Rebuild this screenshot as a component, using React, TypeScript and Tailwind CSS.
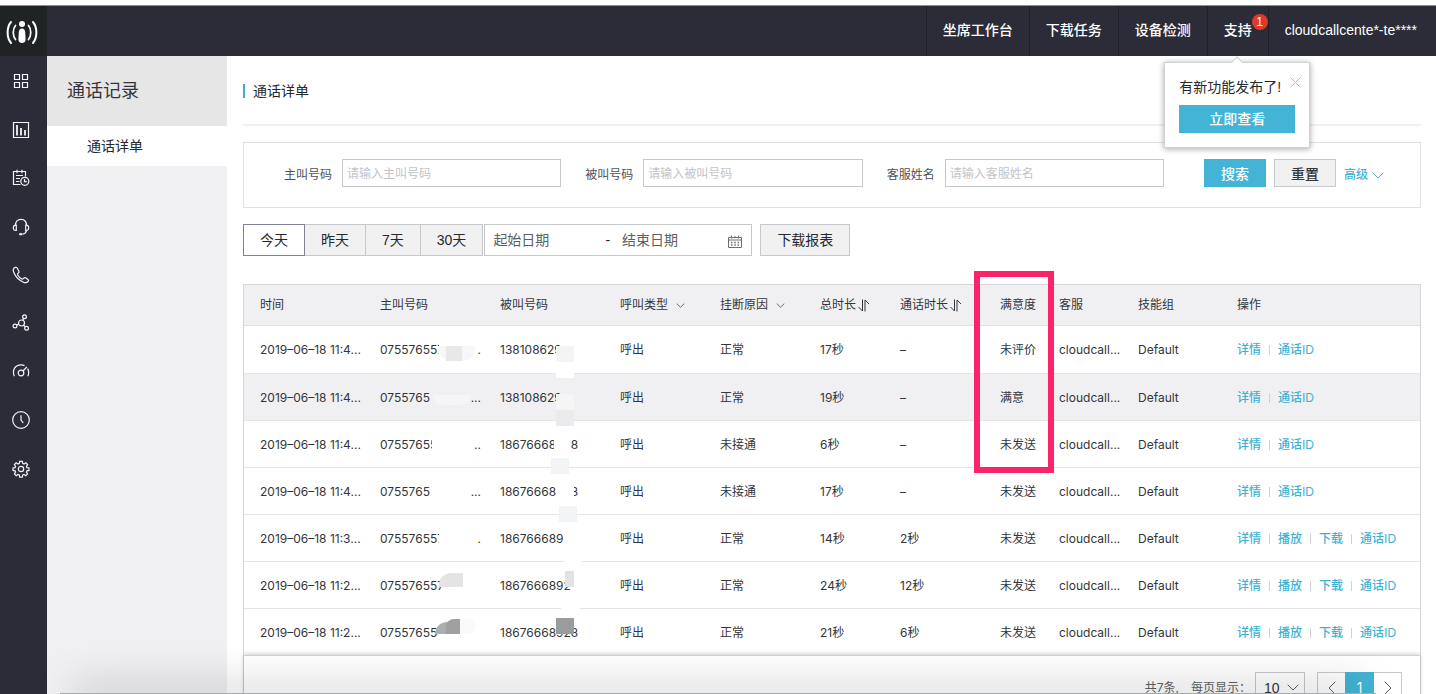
import type { ReactNode } from "react";

type Call = {
  time: string;
  caller: string;
  dots: string;
  callee: string;
  callerMask: string[];
  calleeMask: string[];
  reason: string;
  total: string;
  talk: string;
  rating: string;
  actions: string[];
  hovered?: boolean;
};

const SHORT = ["详情", "通话ID"];
const LONG = ["详情", "播放", "下载", "通话ID"];

const CALLS: Call[] = [
  {
    time: "2019–06–18 11:4...", caller: "075576557", dots: "..", callee: "138108629",
    callerMask: [
      "left-[75px] top-4 h-5 w-[38px] bg-white",
      "left-[75px] top-5 h-[15px] w-9 rounded-b-xl bg-[#f7f7f9]",
      "left-[82px] top-5 h-[15px] w-4 bg-[#e8e8e8]",
    ],
    calleeMask: ["left-[72px] top-5 h-4 w-[18px] bg-[#f4f4f5]", "left-[72px] top-9 z-10 h-4 w-[18px] bg-white"],
    reason: "正常", total: "17秒", talk: "–", rating: "未评价", actions: SHORT,
  },
  {
    time: "2019–06–18 11:4...", caller: "0755765", dots: "...", callee: "138108629",
    callerMask: ["left-[70px] top-[21px] h-[10px] w-9 rounded-b-lg bg-[#f5f5f7]"],
    calleeMask: ["left-[72px] top-5 h-4 w-[18px] bg-[#f5f5f5]", "left-[72px] top-9 z-10 h-4 w-[18px] bg-[#ebebed]"],
    reason: "正常", total: "19秒", talk: "–", rating: "满意", actions: SHORT, hovered: true,
  },
  {
    time: "2019–06–18 11:4...", caller: "07557655", dots: "..", callee: "18676668928",
    callerMask: ["left-[68px] top-4 h-4 w-6 bg-white"],
    calleeMask: ["left-[70px] top-4 h-4 w-[17px] bg-white", "left-[67px] top-[37px] z-10 h-4 w-[18px] bg-[#f3f4f6]"],
    reason: "未接通", total: "6秒", talk: "–", rating: "未发送", actions: SHORT,
  },
  {
    time: "2019–06–18 11:4...", caller: "0755765", dots: "...", callee: "18676668928",
    callerMask: [],
    calleeMask: ["left-[72px] top-4 h-4 w-[18px] bg-white", "left-[75px] top-[38px] z-10 h-4 w-[18px] bg-[#f3f4f6]"],
    reason: "未接通", total: "17秒", talk: "–", rating: "未发送", actions: SHORT,
  },
  {
    time: "2019–06–18 11:3...", caller: "075576557", dots: ".", callee: "186766689",
    callerMask: ["left-[75px] top-4 h-4 w-6 bg-white"],
    calleeMask: ["left-20 top-10 z-10 h-3 w-[18px] bg-white"],
    reason: "正常", total: "14秒", talk: "2秒", rating: "未发送", actions: LONG,
  },
  {
    time: "2019–06–18 11:2...", caller: "075576557", dots: "", callee: "1867666892",
    callerMask: ["left-[75px] top-[11px] h-[14px] w-6 rounded-tl-xl bg-[#e4e4e4]"],
    calleeMask: ["left-[81px] top-[9px] h-4 w-[9px] bg-[#e2e2e4]", "left-[77px] top-10 z-10 h-3 w-[19px] bg-white"],
    reason: "正常", total: "24秒", talk: "12秒", rating: "未发送", actions: LONG,
  },
  {
    time: "2019–06–18 11:2...", caller: "07557655", dots: "", callee: "18676668928",
    callerMask: [
      "left-[71px] top-[13px] h-3 w-[14px] rounded-tl-xl bg-[#adaeb0]",
      "left-[82px] top-[10px] h-[15px] w-4 rounded-tl-lg bg-[#9fa0a2]",
      "left-24 top-[10px] h-[15px] w-4 rounded-r-xl bg-[#fafafb]",
    ],
    calleeMask: ["left-[72px] top-[9px] h-4 w-[18px] bg-[#9b9c9e]"],
    reason: "正常", total: "21秒", talk: "6秒", rating: "未发送", actions: LONG,
  },
];

function Icon({ children }: { children: ReactNode }) {
  return (
    <svg viewBox="0 0 18 18" className="size-[18px]" fill="none" stroke="currentColor" strokeWidth="1.2" aria-hidden="true">
      {children}
    </svg>
  );
}

const RAIL: { name: string; icon: ReactNode }[] = [
  {
    name: "概览",
    icon: <path d="M2.500 2.500h5v5h-5zM10.500 2.500h5v5h-5zM2.500 10.500h5v5h-5zM10.500 10.500h5v5h-5z" />,
  },
  {
    name: "报表",
    icon: (
      <>
        <path d="M1.500 1.500h15v15h-15z" />
        <path d="M5 4v10.500M9 7v7.500M13 9v5.500" strokeWidth="1.800" />
      </>
    ),
  },
  {
    name: "通话记录",
    icon: (
      <>
        <path d="M8.500 15.500h-7v-13h12v5M5 .8v3.400M10 .8v3.400M4 6.500h7M4 9.500h4M4 12.500h3.500" />
        <circle cx="12.800" cy="12.300" r="4" />
        <path d="M12.500 10v2.700h2.300" />
      </>
    ),
  },
  {
    name: "坐席",
    icon: (
      <>
        <path d="M3.500 7.500C3.500 3.500 5.500 1.300 9 1.300s5.500 2.200 5.500 6.200" />
        <path d="M4.300 7.200C2.300 6.900 1.300 8 1.300 9.700s1 3 3 2.700zM13.700 7.200c2-.3 3 .8 3 2.500s-1 3-3 2.700zM14.500 12.300c-.4 2.200-1.800 3.500-4 3.900" />
        <path d="M7.200 16.200h3" strokeWidth="2" />
      </>
    ),
  },
  {
    name: "电话",
    icon: (
      <path d="M3.200 1.400C1.200 2 .8 4.200 1.700 6.300c1.800 4.400 5.200 7.900 9.700 9.900 1.600.7 3.600.6 4.700-.8.600-.8.500-1.500-.2-2l-2.300-1.600c-.6-.4-1.200-.3-1.700.2l-.9.900c-.3.300-.7.300-1.100.1C8 12 6.600 10.500 5.600 8.700c-.2-.4-.1-.8.200-1.100l.8-.8c.5-.5.500-1.100.2-1.700L5.200 2c-.5-.7-1.200-.9-2-.6Z" />
    ),
  },
  {
    name: "技能组",
    icon: (
      <>
        <circle cx="9.500" cy="9" r="3" />
        <circle cx="12.500" cy="2.800" r="1.900" />
        <circle cx="3" cy="12" r="1.900" />
        <circle cx="14.600" cy="14.300" r="1.900" />
        <path d="m10.800 6.300.9-1.800M6.700 10.200l-1.900.9M11.700 11.100l1.500 1.800" />
      </>
    ),
  },
  {
    name: "监控",
    icon: (
      <>
        <path d="M2.300 13.200C-.2 7 3.200 1.800 9 1.800c1.400 0 2.500.3 3.500.8M15.700 5.600c1.200 2.200 1.300 4.800.2 7.600" />
        <circle cx="9" cy="10" r="2.800" />
        <path d="m11 8 3.800-4" />
      </>
    ),
  },
  {
    name: "历史",
    icon: (
      <>
        <circle cx="9" cy="9" r="8.300" />
        <path d="M9 4.300V9l2.300 3" />
      </>
    ),
  },
  {
    name: "设置",
    icon: (
      <>
        <circle cx="9" cy="9" r="2.700" />
        <path d="M7.700 1.300h2.600l.4 2.100 1.300.6 1.900-1.300 1.700 1.800-1.200 1.800.5 1.300 2.100.3v2.500l-2.100.4-.5 1.300 1.200 1.800-1.800 1.800-1.800-1.200-1.300.5-.4 2.100H7.700l-.4-2.100-1.300-.5-1.800 1.200-1.800-1.800L3.600 12.100l-.5-1.300-2.100-.4V7.900l2.100-.3.500-1.300-1.200-1.800 1.700-1.800L6 4l1.300-.6Z" />
      </>
    ),
  },
];

function Chevron({ className }: { className: string }) {
  return (
    <svg viewBox="0 0 12 7" className={className} fill="none" stroke="currentColor" aria-hidden="true">
      <path d="m.7.8 5.300 5.200L11.300.8" />
    </svg>
  );
}

function SortIcon() {
  return (
    <svg viewBox="0 0 13 13" className="ml-px h-[13px] w-[13px]" fill="none" stroke="currentColor" aria-hidden="true">
      <path d="M5.500.500v11.500L1.500 8M8 12.500V1l4 4" />
    </svg>
  );
}

function NavItem({ children }: { children: ReactNode }) {
  return (
    <a href="#" className="flex items-center border-l border-[#1f2029] px-4 pb-[2px]">
      {children}
    </a>
  );
}

function Field({ id, label }: { id: string; label: string }) {
  return (
    <div className="flex min-w-0 flex-1 items-center gap-[10px]">
      <label htmlFor={id} className="shrink-0 pt-1 text-xs text-[#4c5160]">{label}</label>
      <input
        id={id}
        placeholder={"请输入" + label}
        className="h-7 w-full min-w-0 border border-[#c6c8cc] bg-white px-1 pt-[2px] text-xs placeholder:text-[#c2c4c8]"
      />
    </div>
  );
}

function Masks({ items }: { items: string[] }) {
  return (
    <>
      {items.map((m) => (
        <span key={m} className={"absolute " + m} />
      ))}
    </>
  );
}

function HeadCell({ children }: { children: ReactNode }) {
  return (
    <th scope="col" className="h-[41px] border-b border-[#e0e1e3] pl-4 text-left font-normal">
      <span className="flex items-center whitespace-nowrap">{children}</span>
    </th>
  );
}

function Row({ call }: { call: Call }) {
  const cell = "relative whitespace-nowrap pl-4 pt-px h-[47px] border-b border-[#e4e5e7] group-first:h-12";
  return (
    <tr className={call.hovered ? "group bg-[#f0f0f3]" : "group bg-white"}>
      <td className={cell}>{call.time}</td>
      <td className={cell}>
        <span className="flex w-[101px] justify-between">
          <span>{call.caller}</span>
          <span>{call.dots}</span>
        </span>
        <Masks items={call.callerMask} />
      </td>
      <td className={cell}>
        {call.callee}
        <Masks items={call.calleeMask} />
      </td>
      <td className={cell}>呼出</td>
      <td className={cell}>{call.reason}</td>
      <td className={cell}>{call.total}</td>
      <td className={cell}>{call.talk}</td>
      <td className={cell}>{call.rating}</td>
      <td className={cell}>cloudcall...</td>
      <td className={cell}>Default</td>
      <td className={cell}>
        <span className="flex items-center text-[#3eb2d3]">
          {call.actions.map((a, i) => (
            <span key={a} className="flex items-center">
              {i > 0 && <span className="mx-2 h-[10px] w-px bg-[#cfd1d4]" />}
              <a href="#" className="font-['Liberation_Sans','Noto_Sans_CJK_SC',sans-serif] font-medium">{a}</a>
            </span>
          ))}
        </span>
      </td>
    </tr>
  );
}

export default function App() {
  const tab = "border border-l-0 border-[#c6c8cc] bg-[#f1f1f2] px-4";
  return (
    <div className="relative flex h-screen flex-col overflow-hidden bg-white font-['Liberation_Sans','Noto_Sans_CJK_SC',sans-serif] text-sm text-[#33353a]">
      <header className="mt-[5px] flex h-[51px] shrink-0 border-t border-[#8b8d8e] bg-[#2b2c37] text-white">
        <a href="#" aria-label="首页" className="flex w-[47px] items-center bg-[#1f2324] pt-[2px] pl-[6px]">
          <svg viewBox="0 0 32 26" className="h-[26px] w-8" fill="none" stroke="#fff" strokeLinecap="round" aria-hidden="true">
            <circle cx="16" cy="5" r="3" fill="#fff" stroke="none" />
            <path d="M16 9.500c2.200 0 3 1.600 3.200 4l.4 6.500c.2 2.500-1.400 4-3.600 4s-3.800-1.500-3.600-4l.4-6.500c.2-2.400 1-4 3.200-4Z" fill="#fff" stroke="none" />
            <path d="M9.500 6.500c-3 3.500-3 10.500 0 14M22.500 6.500c3 3.500 3 10.500 0 14" strokeWidth="1.700" />
            <path d="M5 3C.5 8.500.5 18.500 5 24M27 3c4.500 5.500 4.500 15.500 0 21" strokeWidth="2" />
          </svg>
        </a>
        <nav className="ml-auto flex font-medium">
          <NavItem>坐席工作台</NavItem>
          <NavItem>下载任务</NavItem>
          <NavItem>设备检测</NavItem>
          <div className="relative flex">
            <NavItem>支持</NavItem>
            <span className="absolute top-2 right-0 flex size-4 items-center justify-center rounded-full bg-[#dc3a2a] text-xs font-normal">1</span>
            <div className="absolute top-full left-1/2 z-20 mt-[6px] w-[146px] -translate-x-1/2 border border-[#d0d1d3] bg-white px-[14px] pt-3 pb-[14px] font-normal text-[#26282c] shadow-[0_1px_6px_rgba(0,0,0,0.35)]">
              <span className="absolute -top-[5px] left-1/2 -ml-1 size-2 rotate-45 border-t border-l border-[#d0d1d3] bg-white" />
              <p className="leading-6 whitespace-nowrap">有新功能发布了!</p>
              <button aria-label="关闭" className="absolute top-[14px] right-2 text-[#b8babd]">
                <svg viewBox="0 0 11 11" className="size-[11px]" stroke="currentColor" aria-hidden="true">
                  <path d="m.5.5 10 10M10.500.5l-10 10" />
                </svg>
              </button>
              <button className="mt-[6px] h-7 w-full bg-[#43b4d5] font-medium text-white">立即查看</button>
            </div>
          </div>
          <a href="#" className="flex items-center border-l border-[#1f2029] pr-[19px] pb-[2px] pl-4">cloudcallcente*-te****</a>
        </nav>
      </header>

      <div className="flex min-h-0 flex-1">
        <nav className="w-[47px] shrink-0 bg-[#2b2c37] text-[#f4f4f7]">
          <div className="grid h-[437px] grid-rows-9 pt-px pr-[5px]">
            {RAIL.map((r) => (
              <a key={r.name} href="#" aria-label={r.name} className="flex items-center justify-center">
                <Icon>{r.icon}</Icon>
              </a>
            ))}
          </div>
        </nav>

        <aside className="w-[180px] shrink-0 bg-[#f0f0f2]">
          <h2 className="flex h-[70px] items-center bg-[#e6e6e6] pl-5 text-lg">通话记录</h2>
          <a href="#" className="flex h-10 items-center bg-white pl-10 text-[#26282c]">通话详单</a>
        </aside>

        <main className="min-w-0 flex-1 pr-[15px] pl-4">
          <div className="flex h-[70px] items-center gap-2 border-b-2 border-[#f0f0f1] pt-[2px] text-[#26282c]">
            <span className="h-[14px] w-[2px] bg-[#43a9c4]" />
            <h1>通话详单</h1>
          </div>

          <form className="mt-4 flex border border-[#e0e1e2] pt-4 pr-9 pb-5 pl-10">
            <div className="flex flex-1 gap-6">
              <Field id="caller" label="主叫号码" />
              <Field id="callee" label="被叫号码" />
              <Field id="agent" label="客服姓名" />
            </div>
            <div className="ml-10 flex items-center gap-2">
              <button type="button" className="h-7 w-[62px] bg-[#43b4d5] pt-px font-medium text-white">搜索</button>
              <button type="button" className="h-7 w-[62px] border border-[#c6c8cc] bg-[#f1f1f2] pt-px font-medium">重置</button>
              <button type="button" className="flex items-center gap-1 pt-1 text-xs font-medium text-[#3eb2d3]">
                高级
                <Chevron className="h-[7px] w-3" />
              </button>
            </div>
          </form>

          <div className="mt-4 flex h-8 text-[#26282c]">
            <button className="border border-[#7f8294] bg-white px-4">今天</button>
            <button className={tab}>昨天</button>
            <button className={tab}>7天</button>
            <button className={tab}>30天</button>
            <div className="ml-px flex w-[268px] items-center border border-[#c6c8cc] px-2">
              <input aria-label="起始日期" placeholder="起始日期" className="w-[112px] placeholder:text-[#5c5f66]" />
              <span>-</span>
              <input aria-label="结束日期" placeholder="结束日期" className="ml-3 w-0 flex-1 placeholder:text-[#5c5f66]" />
              <svg viewBox="0 0 16 16" className="mt-[3px] size-4" fill="none" stroke="#6b6e75" aria-hidden="true">
                <path d="M1.500 3.500h13v10h-13zM1.500 6h13M4.500 1.500v3M11.500 1.500v3M8 2v2" />
                <path d="M4 8.500h1.500M7.300 8.500h1.500M10.600 8.500h1.500M4 11h1.500M7.300 11h1.500M10.600 11h1.500" strokeWidth="1.600" />
              </svg>
            </div>
            <button className="ml-2 border border-[#c6c8cc] bg-[#f1f1f2] px-4">下载报表</button>
          </div>

          <div className="relative mt-7 border border-b-0 border-[#d5d6d8] font-['Inter','Noto_Sans_CJK_SC',sans-serif] text-xs">
            <table className="w-full table-fixed border-separate border-spacing-0">
              <colgroup>
                <col className="w-[120px]" />
                <col className="w-[120px]" />
                <col className="w-[120px]" />
                <col className="w-[100px]" />
                <col className="w-[100px]" />
                <col className="w-20" />
                <col className="w-[100px]" />
                <col className="w-[59px]" />
                <col className="w-[79px]" />
                <col className="w-[99px]" />
                <col />
              </colgroup>
              <thead className="bg-[#f0f0f3]">
                <tr>
                  <HeadCell>时间</HeadCell>
                  <HeadCell>主叫号码</HeadCell>
                  <HeadCell>被叫号码</HeadCell>
                  <HeadCell>呼叫类型<Chevron className="ml-2 h-[5px] w-[9px]" /></HeadCell>
                  <HeadCell>挂断原因<Chevron className="ml-2 h-[5px] w-[9px]" /></HeadCell>
                  <HeadCell>总时长<SortIcon /></HeadCell>
                  <HeadCell>通话时长<SortIcon /></HeadCell>
                  <HeadCell>满意度</HeadCell>
                  <HeadCell>客服</HeadCell>
                  <HeadCell>技能组</HeadCell>
                  <HeadCell>操作</HeadCell>
                </tr>
              </thead>
              <tbody>
                {CALLS.map((c, i) => (
                  <Row key={i} call={c} />
                ))}
              </tbody>
            </table>

            <div className="relative z-10 -mt-px flex h-14 items-center justify-end border-t border-[#d0d1d3] bg-white pt-2 pr-[18px] text-[#5c5f66] shadow-[0_-1px_4px_rgba(0,0,0,0.2)]">
              <span>共7条,</span>
              <label htmlFor="size" className="ml-3">每页显示：</label>
              <div className="relative ml-1">
                <select id="size" className="h-8 w-[50px] appearance-none border border-[#c6c8cc] bg-white pl-2 font-['Liberation_Sans',sans-serif] text-sm text-[#33353a]">
                  <option>10</option>
                </select>
                <Chevron className="pointer-events-none absolute top-3 right-[6px] h-[7px] w-3" />
              </div>
              <div className="ml-3 flex h-8 text-sm">
                <button aria-label="上一页" className="flex w-7 items-center justify-center border border-r-0 border-[#c6c8cc]">
                  <svg viewBox="0 0 8 14" className="h-[14px] w-2" fill="none" stroke="currentColor" aria-hidden="true"><path d="M7.300.7 1 7l6.300 6.300" /></svg>
                </button>
                <button className="w-[29px] bg-[#43b4d5] text-white">1</button>
                <button aria-label="下一页" className="flex w-7 items-center justify-center border border-l-0 border-[#c6c8cc]">
                  <svg viewBox="0 0 8 14" className="h-[14px] w-2" fill="none" stroke="currentColor" aria-hidden="true"><path d="M.7.7 7 7 .7 13.300" /></svg>
                </button>
              </div>
            </div>

            <div className="pointer-events-none absolute -top-[14px] left-[730px] z-10 h-[202px] w-20 border-[6px] border-[#fc2468]" />
          </div>
        </main>
      </div>

      <div className="pointer-events-none absolute right-20 bottom-0 left-20 z-20 h-px shadow-[0_2px_40px_6px_rgba(0,0,0,0.32)]" />
      <div className="pointer-events-none absolute right-[60px] bottom-0 left-[60px] z-20 h-px bg-[#a9aaac]" />
    </div>
  );
}
